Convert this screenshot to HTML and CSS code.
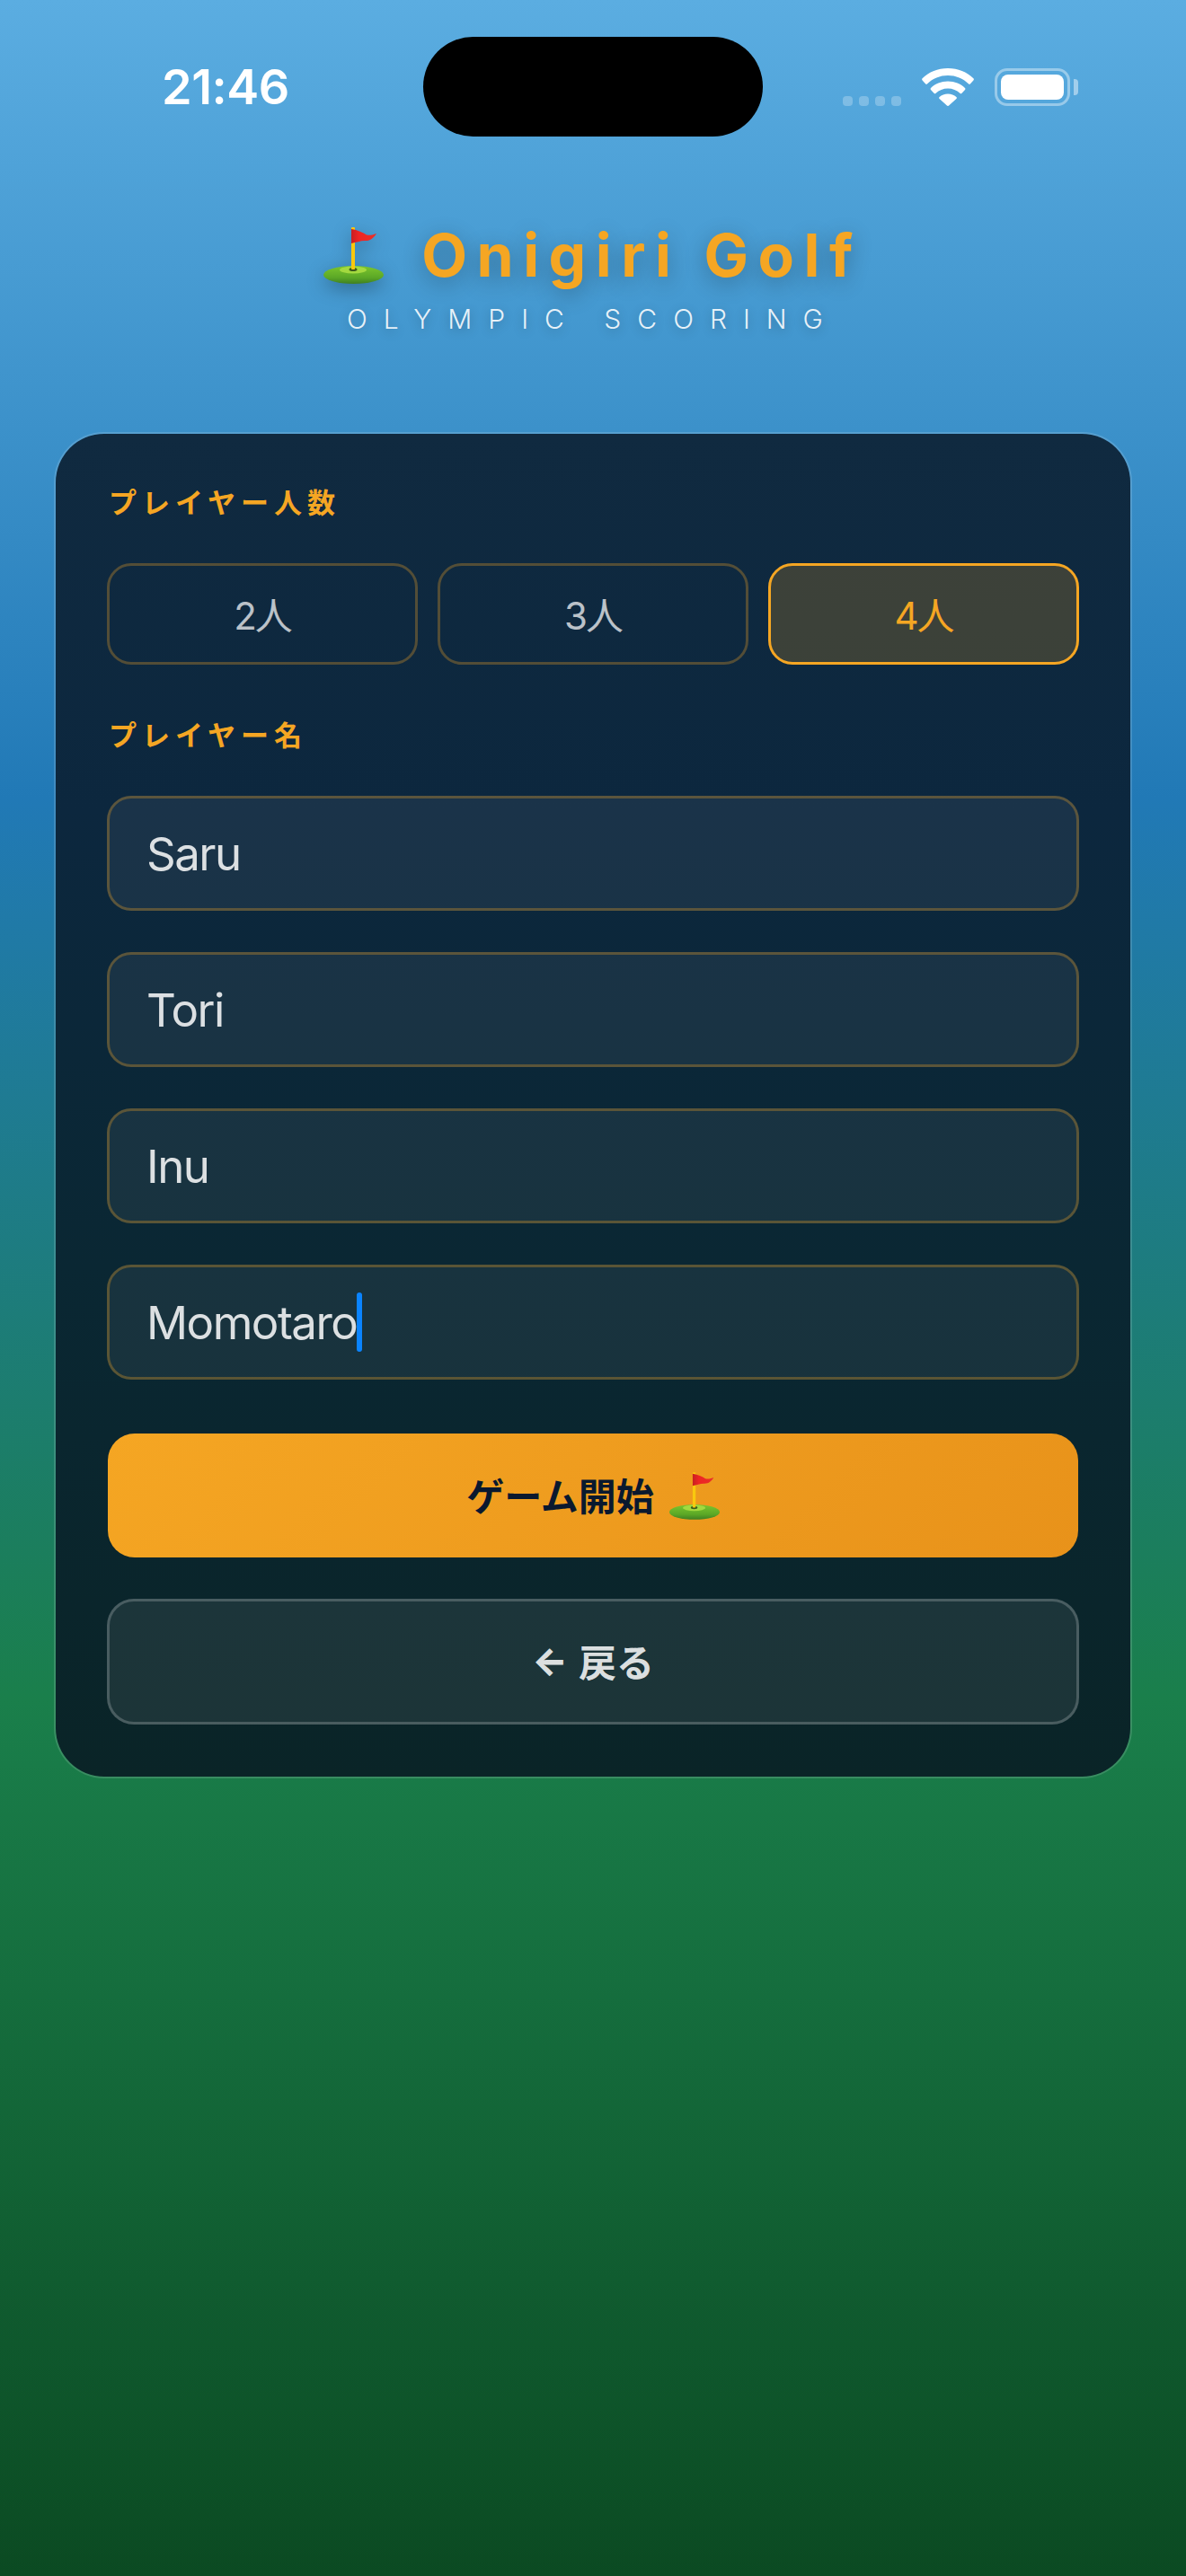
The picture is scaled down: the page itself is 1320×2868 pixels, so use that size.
FILE: index.html
```html
<!DOCTYPE html>
<html lang="ja">
<head>
<meta charset="utf-8">
<title>Onigiri Golf</title>
<link rel="stylesheet" href="styles.css">
</head>
<body>
<svg class="defs" width="0" height="0" aria-hidden="true">
  <defs>
    <linearGradient id="mound" x1="0" y1="0" x2="0" y2="1">
      <stop offset="0" stop-color="#7cc52e"/>
      <stop offset="0.65" stop-color="#5ba826"/>
      <stop offset="1" stop-color="#3f7f22"/>
    </linearGradient>
    <linearGradient id="pennant" x1="0" y1="0" x2="1" y2="0">
      <stop offset="0" stop-color="#c81f22"/>
      <stop offset="0.3" stop-color="#ee2523"/>
      <stop offset="1" stop-color="#e8302a"/>
    </linearGradient>
    <symbol id="golf" viewBox="0 0 67 63">
      <ellipse cx="33.5" cy="53" rx="33.5" ry="10" fill="url(#mound)"/>
      <ellipse cx="33" cy="47.5" rx="15" ry="4" fill="#a3d93f"/>
      <ellipse cx="33" cy="47" rx="4.5" ry="2" fill="#3f5a1a"/>
      <rect x="31" y="0" width="4" height="47" rx="1" fill="#f9c80e"/>
      <path d="M31 2 C38 3 44 6 48 8.5 C52 9.5 56 8 59 7 C56 12 52 15.5 46 15 C41 15 36 17 31 18 Z" fill="url(#pennant)"/>
    </symbol>
  </defs>
</svg>

<div class="phone">
  <div class="island"></div>

  <div class="status">
    <span class="time">21:46</span>
    <div class="status-icons">
      <div class="signal"><i></i><i></i><i></i><i></i></div>
      <svg class="wifi" viewBox="0 0 58 42" width="58" height="42">
        <path d="M29 0C17.6 0 7.9 4.2 0.6 11.3a1.5 1.5 0 0 0 0 2.1L4 17.2a1.5 1.5 0 0 0 2.1 0C12.1 11.4 20.1 8 29 8s16.9 3.4 22.9 9.2a1.5 1.5 0 0 0 2.1 0l3.4-3.8a1.5 1.5 0 0 0 0-2.1C50.1 4.2 40.4 0 29 0Z" fill="#fff"/>
        <path d="M29 14.4c-7.7 0-14.2 2.8-19 7.5a1.5 1.5 0 0 0 0 2.1l3.5 3.8a1.5 1.5 0 0 0 2.1 0c3.5-3.3 8.2-5.3 13.4-5.3s9.9 2 13.4 5.3a1.5 1.5 0 0 0 2.1 0l3.5-3.8a1.5 1.5 0 0 0 0-2.1c-4.8-4.7-11.3-7.5-19-7.5Z" fill="#fff"/>
        <path d="M29 28.6c-3.7 0-7 1.3-9.4 3.5a1.4 1.4 0 0 0 0 2l8.3 7.4a1.6 1.6 0 0 0 2.2 0l8.3-7.4a1.4 1.4 0 0 0 0-2c-2.4-2.2-5.7-3.5-9.4-3.5Z" fill="#fff"/>
      </svg>
      <div class="battery"><div class="battery-fill"></div></div>
    </div>
  </div>

  <header class="brand">
    <h1 class="title"><svg class="title-emoji"><use href="#golf"/></svg><span class="title-text">Onigiri Golf</span></h1>
    <p class="subtitle">OLYMPIC SCORING</p>
  </header>

  <main class="card">
    <div class="label">プレイヤー人数</div>
    <div class="counts">
      <div class="count">2人</div>
      <div class="count">3人</div>
      <div class="count active">4人</div>
    </div>
    <div class="label label-names">プレイヤー名</div>
    <div class="names">
      <div class="name">Saru</div>
      <div class="name">Tori</div>
      <div class="name">Inu</div>
      <div class="name">Momotaro<span class="caret"></span></div>
    </div>
    <div class="start"><span>ゲーム開始</span><svg class="start-emoji"><use href="#golf"/></svg></div>
    <div class="back"><span class="back-arrow">←</span> 戻る</div>
  </main>
</div>
</body>
</html>
```

FILE: styles.css
```css
* { box-sizing: border-box; }

html, body {
  margin: 0;
  padding: 0;
}

body {
  font-family: Inter, "Noto Sans CJK JP", sans-serif;
  color: #fff;
}

.defs { position: absolute; }

.phone {
  position: relative;
  width: 1320px;
  height: 2868px;
  padding-top: 64px;
  overflow: hidden;
  background: linear-gradient(180deg, #5bade1 0%, #2179b6 31%, #1a7f4b 66%, #0b4a22 100%);
}

.island {
  position: absolute;
  left: 471px;
  top: 41px;
  width: 378px;
  height: 111px;
  border-radius: 56px;
  background: #000;
}

.status {
  display: flex;
  justify-content: space-between;
  align-items: center;
  height: 66px;
  padding: 0 120px 0 180px;
}

.time {
  font-size: 54px;
  line-height: 66px;
  font-weight: 600;
  letter-spacing: -0.5px;
}

.status-icons {
  display: flex;
  align-items: center;
}

.signal {
  display: flex;
  gap: 7px;
  align-self: flex-end;
  margin-right: 23px;
}

.signal i {
  display: block;
  width: 11px;
  height: 11px;
  border-radius: 4px;
  background: rgba(255, 255, 255, 0.25);
}

.wifi { display: block; }

.battery {
  position: relative;
  width: 84px;
  height: 42px;
  margin-left: 23px;
  margin-right: 9px;
  padding: 4px;
  border: 3px solid rgba(255, 255, 255, 0.4);
  border-radius: 14px;
}

.battery::after {
  content: "";
  position: absolute;
  right: -12px;
  top: 9px;
  width: 5px;
  height: 18px;
  border-radius: 0 4px 4px 0;
  background: rgba(255, 255, 255, 0.45);
}

.battery-fill {
  width: 100%;
  height: 100%;
  border-radius: 8px;
  background: #fff;
}

.brand {
  margin-top: 108px;
  text-align: center;
}

.title {
  display: flex;
  justify-content: center;
  align-items: center;
  margin: 0;
  height: 92px;
  font-size: 66px;
  line-height: 92px;
  font-weight: 700;
  letter-spacing: 10.5px;
  color: #f5a623;
  text-shadow: 0 6px 24px rgba(0, 0, 0, 0.3);
}

.title-emoji {
  width: 67px;
  height: 63px;
  margin-right: 42px;
  filter: drop-shadow(0 6px 10px rgba(0, 0, 0, 0.3));
}

.subtitle {
  margin: 5px 0 0;
  font-size: 30px;
  line-height: 40px;
  font-weight: 300;
  letter-spacing: 18px;
  color: rgba(255, 255, 255, 0.88);
  text-shadow: 0 3px 12px rgba(0, 0, 0, 0.25);
}

.card {
  width: 1200px;
  height: 1499px;
  margin: 106px auto 0;
  padding: 60px 58px 0;
  border: 2px solid rgba(255, 255, 255, 0.14);
  border-radius: 56px;
  background: linear-gradient(180deg, #102a40 0%, #0c273e 28%, #0a2733 62%, #0a2427 100%);
  background-clip: padding-box;
}

.label {
  font-family: "Noto Sans CJK JP", sans-serif;
  font-size: 31px;
  line-height: 30px;
  font-weight: 700;
  letter-spacing: 6px;
  color: #f5a623;
  padding-left: 1px;
}

.counts {
  display: grid;
  grid-template-columns: repeat(3, 1fr);
  gap: 22px;
  margin: 54px -1px 0;
}

.count {
  display: flex;
  align-items: center;
  justify-content: center;
  height: 113px;
  padding-bottom: 2px;
  border: 3px solid rgba(245, 166, 35, 0.3);
  border-radius: 27px;
  font-size: 42px;
  letter-spacing: -2px;
  color: rgba(255, 255, 255, 0.72);
}

.count.active {
  border-color: #f5a623;
  background: rgba(245, 166, 35, 0.2);
  color: #f5a623;
}

.label-names {
  margin-top: 62px;
}

.names {
  display: flex;
  flex-direction: column;
  gap: 46px;
  margin: 54px -1px 0;
}

.name {
  display: flex;
  align-items: center;
  height: 128px;
  padding-left: 41px;
  border: 3px solid rgba(245, 166, 35, 0.3);
  border-radius: 27px;
  background: rgba(255, 255, 255, 0.06);
  font-size: 51px;
  letter-spacing: -1.5px;
  color: rgba(255, 255, 255, 0.85);
}

.caret {
  width: 6px;
  height: 66px;
  border-radius: 3px;
  background: #0a84ff;
}

.start {
  display: flex;
  align-items: center;
  justify-content: center;
  gap: 17px;
  height: 138px;
  margin-top: 60px;
  padding-bottom: 4px;
  border-radius: 30px;
  background: linear-gradient(135deg, #f5a623, #e8921a);
  font-family: "Noto Sans CJK JP", sans-serif;
  font-size: 42px;
  font-weight: 700;
  color: #0a192f;
}

.start-emoji {
  width: 56px;
  height: 53px;
  margin-top: 4px;
}

.back {
  display: flex;
  align-items: center;
  justify-content: center;
  gap: 12px;
  height: 140px;
  margin: 46px -1px 0;
  padding-bottom: 4px;
  border: 3px solid rgba(255, 255, 255, 0.2);
  border-radius: 30px;
  background: rgba(255, 255, 255, 0.075);
  font-size: 42px;
  font-weight: 600;
  color: rgba(255, 255, 255, 0.87);
}

.back-arrow { font-weight: 800; }
```
